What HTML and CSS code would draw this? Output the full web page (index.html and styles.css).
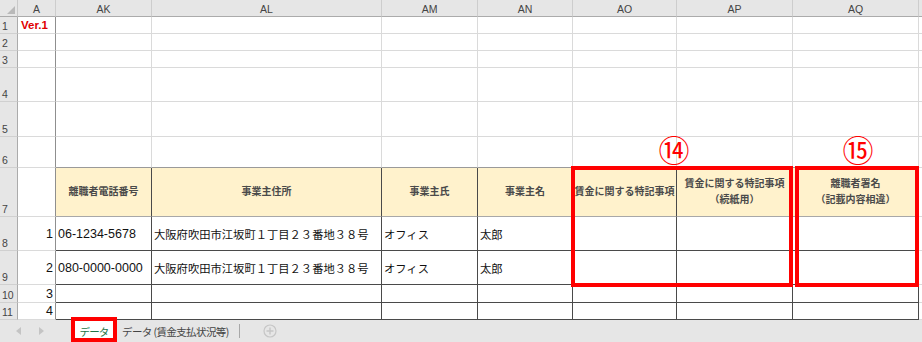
FILE: index.html
```html
<!DOCTYPE html>
<html lang="ja">
<head>
<meta charset="utf-8">
<title>データ</title>
<link rel="stylesheet" href="styles.css">
</head>
<body>
<div class="app">
  <div class="sheet">
    <div class="corner"><svg width="17" height="16" viewBox="0 0 17 16"><path d="M15 6 L15 14 L7 14 Z" fill="#b9b9b9"/></svg></div>
    <div class="ch">A</div>
    <div class="ch">AK</div>
    <div class="ch">AL</div>
    <div class="ch">AM</div>
    <div class="ch">AN</div>
    <div class="ch">AO</div>
    <div class="ch">AP</div>
    <div class="ch">AQ</div>
    <div class="ch end"></div>

    <div class="rh">1</div>
    <div class="c fa"><span class="ver">Ver.1</span></div>
    <div class="c"></div><div class="c"></div><div class="c"></div><div class="c"></div><div class="c"></div><div class="c"></div><div class="c"></div>
    <div class="c end"></div>

    <div class="rh">2</div>
    <div class="c fa"></div>
    <div class="c"></div><div class="c"></div><div class="c"></div><div class="c"></div><div class="c"></div><div class="c"></div><div class="c"></div>
    <div class="c end"></div>

    <div class="rh">3</div>
    <div class="c fa"></div>
    <div class="c"></div><div class="c"></div><div class="c"></div><div class="c"></div><div class="c"></div><div class="c"></div><div class="c"></div>
    <div class="c end"></div>

    <div class="rh">4</div>
    <div class="c fa"></div>
    <div class="c"></div><div class="c"></div><div class="c"></div><div class="c"></div><div class="c"></div><div class="c"></div><div class="c"></div>
    <div class="c end"></div>

    <div class="rh">5</div>
    <div class="c fa"></div>
    <div class="c"></div><div class="c"></div><div class="c"></div><div class="c"></div><div class="c"></div><div class="c"></div><div class="c"></div>
    <div class="c end"></div>

    <div class="rh">6</div>
    <div class="c fa"></div>
    <div class="c tt"></div><div class="c tt"></div><div class="c tt"></div><div class="c tt"></div><div class="c tt"></div><div class="c tt"></div><div class="c tt"></div>
    <div class="c end"></div>

    <div class="rh">7</div>
    <div class="c fa"></div>
    <div class="c t hd"><span>離職者電話番号</span></div>
    <div class="c t hd"><span>事業主住所</span></div>
    <div class="c t hd"><span>事業主氏</span></div>
    <div class="c t hd"><span>事業主名</span></div>
    <div class="c t hd"><span>賃金に関する特記事項</span></div>
    <div class="c t hd"><span>賃金に関する特記事項</span><span>（続紙用）</span></div>
    <div class="c t hd"><span>離職者署名</span><span>（記載内容相違）</span></div>
    <div class="c end"></div>

    <div class="rh">8</div>
    <div class="c fa num">1</div>
    <div class="c t d">06-1234-5678</div>
    <div class="c t d"><span class="jp">大阪府吹田市江坂町１丁目２３番地３８号</span></div>
    <div class="c t d"><span class="jp">オフィス</span></div>
    <div class="c t d"><span class="jp">太郎</span></div>
    <div class="c t d"></div>
    <div class="c t d"></div>
    <div class="c t d"></div>
    <div class="c end"></div>

    <div class="rh">9</div>
    <div class="c fa num">2</div>
    <div class="c t d">080-0000-0000</div>
    <div class="c t d"><span class="jp">大阪府吹田市江坂町１丁目２３番地３８号</span></div>
    <div class="c t d"><span class="jp">オフィス</span></div>
    <div class="c t d"><span class="jp">太郎</span></div>
    <div class="c t d"></div>
    <div class="c t d"></div>
    <div class="c t d"></div>
    <div class="c end"></div>

    <div class="rh">10</div>
    <div class="c fa num">3</div>
    <div class="c t"></div><div class="c t"></div><div class="c t"></div><div class="c t"></div><div class="c t"></div><div class="c t"></div><div class="c t"></div>
    <div class="c end"></div>

    <div class="rh">11</div>
    <div class="c fa num">4</div>
    <div class="c t"></div><div class="c t"></div><div class="c t"></div><div class="c t"></div><div class="c t"></div><div class="c t"></div><div class="c t"></div>
    <div class="c end"></div>
  </div>

  <div class="tabs">
    <div class="nav">
      <svg width="6" height="8" viewBox="0 0 6 8"><path d="M5 0 L5 8 L0 4 Z" fill="#c4c4c4"/></svg>
      <svg width="6" height="8" viewBox="0 0 6 8"><path d="M1 0 L1 8 L6 4 Z" fill="#c4c4c4"/></svg>
    </div>
    <div class="tab active">データ</div>
    <div class="tab">データ (賃金支払状況等)</div>
    <div class="sep"></div>
    <div class="add"><svg width="14" height="14" viewBox="0 0 14 14"><circle cx="7" cy="7" r="6" fill="none" stroke="#c6c6c6" stroke-width="1.2"/><path d="M7 3.5 V10.5 M3.5 7 H10.5" stroke="#c6c6c6" stroke-width="1.4"/></svg></div>
  </div>

  <div class="mark m14">⑭</div>
  <div class="mark m15">⑮</div>
  <div class="box b14"></div>
  <div class="box b15"></div>
  <div class="box btab"></div>
</div>
</body>
</html>
```

FILE: styles.css
```css
* { box-sizing: border-box; }
html, body { margin: 0; padding: 0; }
body {
  width: 922px;
  height: 342px;
  overflow: hidden;
  background: #fff;
  font-family: "Liberation Sans", "Noto Sans CJK JP", sans-serif;
}
.app { position: relative; width: 922px; height: 342px; }

.sheet {
  display: grid;
  grid-template-columns: 18px 38px 96px 230px 96px 95px 104px 116px 126px 3px;
  grid-template-rows: 17px 17px 17px 17px 34px 35px 31px 49px 34px 34px 18px 17px;
}

.corner {
  background: #e6e6e6;
  border-right: 1px solid #c9c9c9;
  border-bottom: 1px solid #ababab;
  display: flex;
}
.ch {
  background: #e6e6e6;
  border-right: 1px solid #cdcdcd;
  border-bottom: 1px solid #ababab;
  display: flex;
  align-items: center;
  justify-content: center;
  padding-top: 2px;
  font-size: 10.5px;
  color: #444;
}
.ch.end { border-right: none; }

.rh {
  background: #e6e6e6;
  border-right: 1px solid #ababab;
  border-bottom: 1px solid #d0d0d0;
  display: flex;
  align-items: flex-end;
  padding: 0 0 0 2px;
  font-size: 10.5px;
  line-height: 13px;
  color: #444;
}

.c {
  border-right: 1px solid #dadada;
  border-bottom: 1px solid #dadada;
  display: flex;
  align-items: center;
  min-width: 0;
  white-space: nowrap;
  font-size: 12.5px;
  color: #111;
}
.c.end { border-right: none; }
.c.fa { border-right-color: #8f8f8f; }
.c.num { justify-content: flex-end; padding-right: 2px; }
.ver {
  color: #e00000;
  font-weight: bold;
  font-size: 11.5px;
  padding-left: 3px;
}

.c.tt { border-bottom-color: #9a9a9a; }
.c.t { border-right-color: #4a4a4a; border-bottom-color: #4a4a4a; }
.c.hd {
  background: #fff2cc;
  border-bottom-color: #a8a8a8;
  flex-direction: column;
  justify-content: center;
  align-items: center;
  font-family: "Noto Sans CJK JP", sans-serif;
  font-size: 10px;
  font-weight: bold;
  line-height: 16px;
  color: #4a4a4a;
  padding-bottom: 3px;
}
.c.d { padding-left: 2px; }
.jp {
  font-family: "Noto Sans CJK JP", sans-serif;
  font-size: 11.3px;
}

.tabs {
  height: 22px;
  background: #e6e6e6;
  display: flex;
  align-items: stretch;
  font-family: "Noto Sans CJK JP", sans-serif;
  font-size: 10.5px;
}
.nav {
  width: 72px;
  display: flex;
  align-items: center;
  gap: 16px;
  padding-left: 16px;
}
.tab {
  display: flex;
  align-items: center;
  color: #444;
  padding: 0 6px;
  letter-spacing: -0.6px;
}
.tab.active {
  background: #fff;
  color: #217346;
  width: 44px;
  justify-content: center;
  padding: 0;
  letter-spacing: -0.8px;
}
.sep {
  width: 1px;
  background: #a8a8a8;
  margin: 4px 0 4px 4px;
}
.add {
  display: flex;
  align-items: center;
  padding-left: 23px;
}

.mark {
  position: absolute;
  color: #ff0000;
  font-family: "Noto Sans CJK JP", sans-serif;
  font-size: 31px;
  line-height: 31px;
  width: 40px;
  text-align: center;
}
.m14 { left: 654px; top: 133px; }
.m15 { left: 838px; top: 133px; }

.box {
  position: absolute;
  border: 4px solid #ff0000;
}
.b14 { left: 571px; top: 166px; width: 222px; height: 121px; }
.b15 { left: 795px; top: 166px; width: 124px; height: 121px; }
.btab { left: 71px; top: 317px; width: 46px; height: 25px; }
```
